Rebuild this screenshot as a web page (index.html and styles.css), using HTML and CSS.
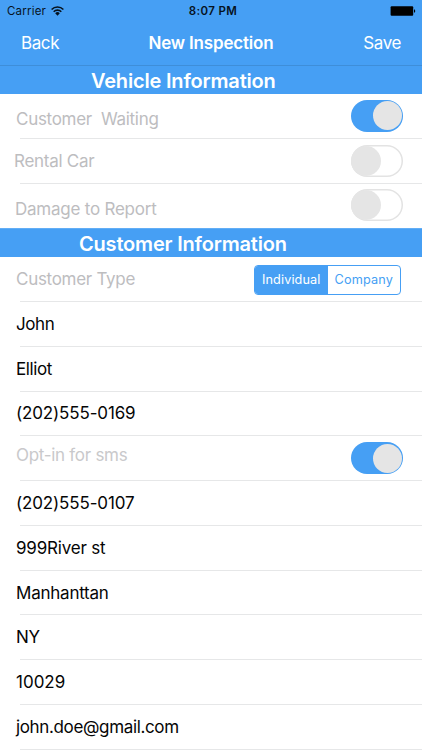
FILE: index.html
```html
<!DOCTYPE html>
<html lang="en">
<head>
<meta charset="utf-8">
<title>New Inspection</title>
<link rel="stylesheet" href="styles.css">
</head>
<body>
<header class="top">
  <div class="status">
    <div class="carrier"><span>Carrier</span>
      <svg class="wifi" viewBox="0 0 13 10" width="13" height="10"><path d="M.6 3.5a8.3 8.3 0 0 1 11.8 0M2.7 5.7a5.4 5.4 0 0 1 7.6 0" fill="none" stroke="#06131f" stroke-width="1.6"/><path d="M4.2 7.3a3.2 3.2 0 0 1 4.6 0L6.5 9.7z" fill="#06131f"/></svg>
    </div>
    <span class="clock">8:07 PM</span>
    <svg class="battery" viewBox="0 0 26 10" width="26" height="10"><rect x=".6" y=".3" width="22.6" height="9.4" rx="1"/><path d="M24 3.2c1.6.3 1.6 3.3 0 3.6z"/></svg>
  </div>
  <nav class="nav"><span class="back">Back</span><h1>New Inspection</h1><span class="save">Save</span></nav>
</header>
<main>
  <h2 class="section vehicle"><span>Vehicle Information</span></h2>
  <div class="row label waiting"><span>Customer&nbsp; Waiting</span><i class="switch on"></i></div>
  <div class="row label rental"><span>Rental Car</span><i class="switch"></i></div>
  <div class="row label damage last"><span>Damage to Report</span><i class="switch"></i></div>
  <h2 class="section customer"><span>Customer Information</span></h2>
  <div class="row label type"><span>Customer Type</span><div class="segments"><b class="selected">Individual</b><b>Company</b></div></div>
  <div class="row"><span>John</span></div>
  <div class="row"><span>Elliot</span></div>
  <div class="row phone"><span>(202)555-0169</span></div>
  <div class="row label sms"><span>Opt-in for sms</span><i class="switch on"></i></div>
  <div class="row phone"><span>(202)555-0107</span></div>
  <div class="row street"><span>999River st</span></div>
  <div class="row city"><span>Manhanttan</span></div>
  <div class="row"><span>NY</span></div>
  <div class="row zip"><span>10029</span></div>
  <div class="row email"><span>john.doe@gmail.com</span></div>
</main>
</body>
</html>
```
FILE: styles.css
```css
* { box-sizing: border-box; }
body { margin: 0; width: 422px; height: 750px; overflow: hidden; background: #fff; color: #050505; font-family: Inter, "Liberation Sans", sans-serif; }
h1, h2 { margin: 0; }
.top { height: 66px; background: #469ff4; border-bottom: 1px solid #3e8ed9; }
.status { height: 21px; display: grid; grid-template-columns: 1fr auto 1fr; align-items: center; padding: 1px 6px 0 7px; color: #06131f; font-size: 11.5px; }
.carrier { display: flex; align-items: center; gap: 5px; letter-spacing: .2px; }
.clock { font-weight: 600; letter-spacing: .4px; padding-left: 3px; }
.battery { justify-self: end; fill: #000; }
.nav { height: 44px; display: grid; grid-template-columns: 1fr auto 1fr; align-items: center; padding: 0 21px; color: #fff; font-size: 17px; letter-spacing: -.4px; }
.nav h1 { font-size: 17px; font-weight: 600; letter-spacing: -.18px; }
.save { justify-self: end; }
.section { background: #469ff4; color: #fff; font-size: 20px; line-height: 28px; font-weight: 600; letter-spacing: -.18px; }
.vehicle { height: 28px; padding: 1px 0 0 91px; }
.customer { height: 29px; padding: 1px 0 0 79px; border-top: 1px solid #62aef6; }
.row { position: relative; height: 44.78px; padding: 0 19px 1px 16px; display: flex; align-items: center; justify-content: space-between; font-size: 17px; letter-spacing: -.42px; white-space: nowrap; }
.row::after { content: ""; position: absolute; left: 20px; right: 0; bottom: 0; height: 1px; background: #e6e7e8; }
.last::after { display: none; }
.label { color: #bdbdbf; letter-spacing: -.29px; }
.waiting span { padding-top: 6px; }
.rental { padding-left: 14px; letter-spacing: -.28px; }
.damage { padding-left: 15px; letter-spacing: -.23px; }
.damage span { padding-top: 7px; }
.sms { color: #c9c9cb; }
.sms span { padding-bottom: 7px; }
.phone { letter-spacing: -.15px; }
.city { letter-spacing: -.23px; }
.street { letter-spacing: -.2px; }
.zip { letter-spacing: 0; }
.email { letter-spacing: -.35px; }
.switch { width: 52px; height: 32px; border-radius: 16px; display: flex; align-items: center; box-shadow: inset 0 0 0 1.5px #e3e3e3; }
.switch::before { content: ""; width: 30px; height: 30px; border-radius: 50%; background: #e5e5e5; }
.switch.on { background: #469ff4; box-shadow: none; justify-content: flex-end; padding-right: 1.2px; }
.switch.on::before { width: 29px; height: 29px; }
.type { padding-bottom: 0; }
.type > span { padding-bottom: 1px; }
.segments { display: flex; width: 147px; height: 30px; margin-right: 2px; border: 1px solid #469ff4; border-radius: 4px; overflow: hidden; font-size: 12.7px; letter-spacing: .12px; }
.segments b { flex: 1; display: flex; align-items: center; justify-content: center; font-weight: 400; color: #469ff4; }
.segments .selected { background: #469ff4; color: #fff; }
```
